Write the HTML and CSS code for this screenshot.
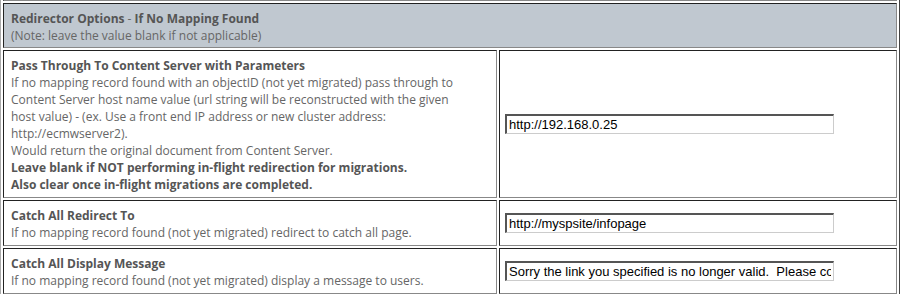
FILE: index.html
```html
<!DOCTYPE html>
<html lang="en">
    <head>
        <meta charset="utf-8" />
        <title>Redirector Options</title>
        <link rel="stylesheet" href="styles.css">
    </head>
    <body>
        <table class="settings">
            <tr class="clipped">
                <td colspan="2"></td>
            </tr>
            <tr>
                <td colspan="2" class="section">
                    <b>Redirector Options</b> - <b>If No Mapping Found</b><br/>
                    (Note: leave the value blank if not applicable)
                </td>
            </tr>
            <tr>
                <td class="label">
                    <b>Pass Through To Content Server with Parameters</b><br/>
                    If no mapping record found with an objectID (not yet migrated) pass through to<br/>
                    Content Server host name value (url string will be reconstructed with the given<br/>
                    host value) - (ex. Use a front end IP address or new cluster address:<br/>
                    http://ecmwserver2).<br/>
                    Would return the original document from Content Server.<br/>
                    <b>Leave blank if NOT performing in-flight redirection for migrations.</b><br/>
                    <b>Also clear once in-flight migrations are completed.</b>
                </td>
                <td class="value"><input type="text" value="http://192.168.0.25" /></td>
            </tr>
            <tr>
                <td class="label">
                    <b>Catch All Redirect To</b><br/>
                    If no mapping record found (not yet migrated) redirect to catch all page.
                </td>
                <td class="value"><input type="text" value="http://myspsite/infopage" /></td>
            </tr>
            <tr>
                <td class="label">
                    <b>Catch All Display Message</b><br/>
                    If no mapping record found (not yet migrated) display a message to users.
                </td>
                <td class="value"><input type="text" value="Sorry the link you specified is no longer valid.  Please contact the site administrator." /></td>
            </tr>
        </table>
    </body>
</html>
```

FILE: styles.css
```css
* {
    margin: 0;
    padding: 0;
}

body {
    margin: -20px 0 0 0;
    background: #fff;
    font-family: "Open Sans", "Noto Sans", sans-serif;
    font-size: 12px;
    line-height: 17px;
    color: #666;
}

b {
    color: #555;
    font-weight: bold;
}

.settings {
    width: 900px;
    border-collapse: separate;
    border-spacing: 2px;
    border: 1px solid;
    border-color: #aaa #444 #444 #aaa;
}

.settings td {
    border: 1px solid;
    border-color: #222 #888 #888 #222;
    vertical-align: middle;
}

.settings tr.clipped td {
    height: 16px;
}

td.section {
    background: #c0c8d0;
    padding: 6px 7px 3px 7px;
}

td.label {
    width: 478px;
    padding: 6px 7px 4px 7px;
}

td.value {
    padding: 4px 5px;
}

td.value input {
    width: 329px;
    height: 20px;
    box-sizing: border-box;
    padding: 0 2px;
    font-family: "Liberation Sans", Arial, sans-serif;
    font-size: 13px;
    color: #000;
    border: 1px solid;
    border-color: #555 #ccc #ccc #555;
    border-width: 2px 1px 1px 2px;
    background: #fff;
}
```
